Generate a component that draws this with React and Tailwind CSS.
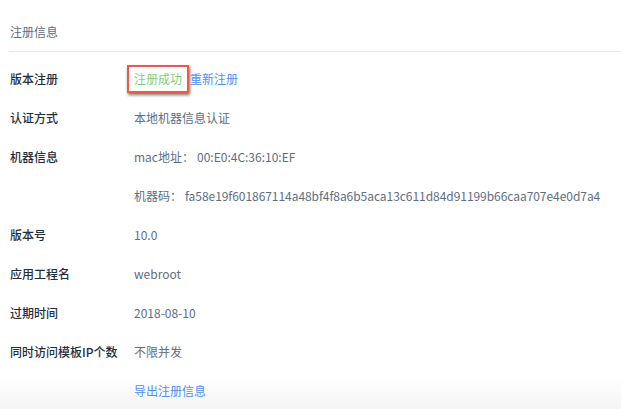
import React from 'react';

const font = { fontFamily: '"Noto Sans CJK SC", "Noto Sans", sans-serif' };

const Row = ({ label, children }) => (
  <div className="flex h-[39px] items-center">
    <div className="w-[124px] shrink-0 font-medium text-[#1f2d3d]">{label}</div>
    <div className="flex items-center text-[#5e6d82]">{children}</div>
  </div>
);

export default function App() {
  const rows = [
    ['版本号', '10.0'],
    ['应用工程名', 'webroot'],
    ['过期时间', '2018-08-10'],
    ['同时访问模板IP个数', '不限并发'],
  ];

  return (
    <div className="w-[621px] h-[409px] overflow-hidden bg-gradient-to-b from-white from-[92%] to-[#f5f5f5] text-[12px] leading-[16px]" style={font}>
      {/* Header */}
      <div className="ml-[9px] h-[52px] border-b border-[#e6e6e6] pl-px pt-[24px] text-[#5e6d82]">
        注册信息
      </div>

      <div className="pl-[10px] pt-[7px]">
        <Row label="版本注册">
          <span className="-ml-[7px] flex h-[28px] items-center border-2 border-[#ee5a4a] px-[5px] text-[#7fcf7f] shadow-[1px_2px_3px_rgba(0,0,0,0.55)]">
            注册成功
          </span>
          <span className="ml-px text-[#4a90f5]">重新注册</span>
        </Row>
        <Row label="认证方式">本地机器信息认证</Row>
        <Row label="机器信息">
          <span>mac地址：</span>
          <span className="ml-[3px]">00:E0:4C:36:10:EF</span>
        </Row>
        <Row label="">
          <span>机器码：</span>
          <span className="ml-[3px] tracking-[-0.05px]">fa58e19f601867114a48bf4f8a6b5aca13c611d84d91199b66caa707e4e0d7a4</span>
        </Row>
        {rows.map(([k, v]) => (
          <Row key={k} label={k}>{v}</Row>
        ))}
        <Row label="">
          <span className="text-[#4a90f5]">导出注册信息</span>
        </Row>
      </div>
    </div>
  );
}
